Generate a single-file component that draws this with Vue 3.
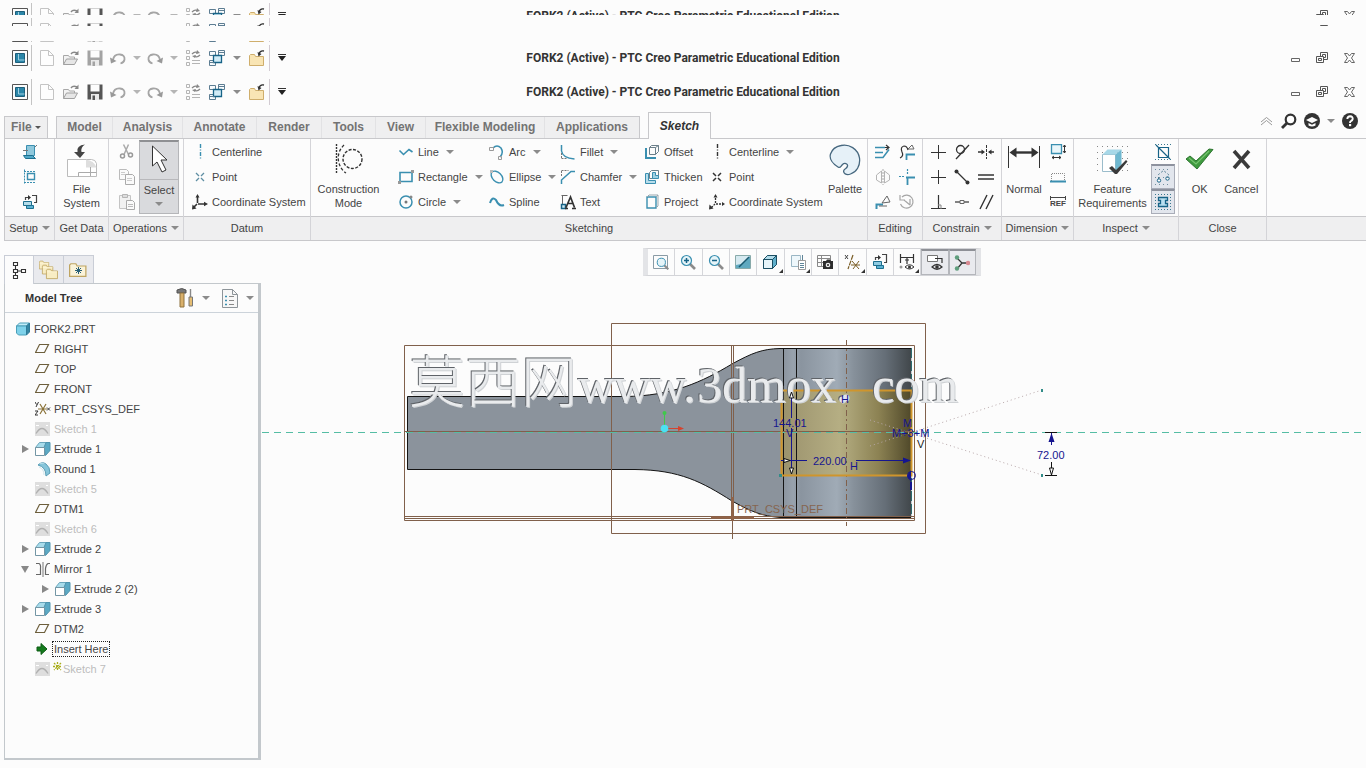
<script setup>
import { h } from 'vue'

const B = '#3a8fb0'
const K = '#333'
const line = (d, c = K, w = 1, extra = '') =>
  `<path d="${d}" fill="none" stroke="${c}" stroke-width="${w}" ${extra}/>`
const fill = (d, c = K, extra = '') => `<path d="${d}" fill="${c}" ${extra}/>`
const magnifier = (mark) =>
  line('M10 10l5 5', '#8b8b8b', 2.6) +
  `<circle cx="6.5" cy="6.5" r="5" fill="#e6f4f8" stroke="${B}" stroke-width="1.2"/>` + mark

const saveIcon = (c) =>
  fill('M.5.5h15v15H.5z', c) + fill('M3.5.5h9v7h-9z', '#fcfcfc') +
  fill('M4 10h8v6H4z', '#e9e9e9') + fill('M5.500 11.500h2.500V16H5.500z', c)
const cube = (front, top, side) =>
  fill('M1.500 5.500h9v9h-9z', front, `stroke="${B}"`) +
  fill('M1.500 5.500l4-4h9l-4 4z', top, `stroke="${B}"`) +
  fill('M10.500 5.500l4-4v9l-4 4z', side, `stroke="${B}"`)
const folder = (x, y, s = 1) =>
  `<g transform="translate(${x} ${y}) scale(${s})">` +
  fill('M.5 12.500V2.500l1-1h4l1 2h7v9z', '#f8edc4', 'stroke="#bfa562"') +
  line('M1 4.500h12', '#fff6d8') + '</g>'

const icons = {
  app: fill('M.5.5h15v15H.5z', '#fcfcfc', 'stroke="#555"') + fill('M3.500 3.500h9v9h-9z', '#2b86a8', 'stroke="#1d5f7b"') + line('M6.500 4v6h6', '#9fd0e2'),
  doc: fill('M1.500.5h8l5 5v10h-13z', '#fdfdfd', 'stroke="#c4c4c4"') + line('M9.500.5v5h5', '#c4c4c4'),
  open: fill('M.5 14.500v-9h5l1 1.500h5v2', '#f2f2f2', 'stroke="#a8a8a8"') + fill('M.5 14.500l3-5.500h11l-3 5.500z', '#e6e6e6', 'stroke="#a0a0a0"') + line('M8 4q2-3 6-1', '#888', 1.4) + fill('M15.500.5v4.500h-4z', '#888'),
  saveDim: saveIcon('#a3a3a3'),
  save: saveIcon('#555'),
  undo: line('M3 10q1-6 7-5.500 5 .5 4.500 5-.5 3-4 4', '#a5a5a5', 1.8) + fill('M0 7.500l1 6 5.500-2.500z', '#999'),
  redo: line('M13 10q-1-6-7-5.500-5 .5-4.500 5 .5 3 4 4', '#a5a5a5', 1.8) + fill('M16 7.500l-1 6-5.500-2.500z', '#999'),
  regen: line('M1.500.5h3v3h-3zM1.500 6.500h3v3h-3zM1.500 12.500h3v3h-3zM7 10.500h8M7 13.500h8', '#b5b5b5') + line('M7 4q3-3 6-1M15 5q-3 3-6 1', '#888', 1.3) + fill('M12 0l3 3-4 1zM10 8L7 6l4-1z', '#888'),
  windows: fill('M.5 1.500h6v4h-6zM9.500.5h6v5h-6zM.5 10.500h6v5h-6z', '#f8fbfd', 'stroke="#5d7d92"') + fill('M4.500 5.500h8v7h-8z', '#d2ecf7', 'stroke="#176387" stroke-width="1.3"') + line('M9.500 2.500h6M.5 12.500h5', '#5d7d92'),
  closeWin: fill('M.5 15.500v-10l1-1h4l1 2h8v9z', '#f9e5b4', 'stroke="#cfae6c"') + line('M15 1q-4-1-5 3', K, 1.3) + fill('M8.500 2l1 4.500 3-2.500z', K),
  min: line('M3.500 7.500h8v3h-8z', '#666'),
  restore: line('M5.500 1.500h7v7h-7zM7.500 3.500h3v3h-3z', '#555') + fill('M1.500 5.500h7v6h-7z', '#fcfcfc', 'stroke="#555"') + line('M3.500 7.500h3v2h-3z', '#555'),
  close: line('M2.500 2.500h3l2 2.500 2-2.500h3L9.500 7l3 4.500h-3l-2-2.500-2 2.500h-3L5.500 7z', '#666'),
  chevron: line('M2 8l5.500-4.500L13 8M2 11l5.500-4.500L13 11', '#999'),
  search: `<circle cx="9.500" cy="6.500" r="4.800" fill="#fff" stroke="#333" stroke-width="2.200"/>` + line('M6 10l-5 5', K, 2.8),
  learn: `<circle cx="8" cy="8" r="8" fill="#333"/>` + fill('M2 7l6-3 6 3-6 3z', '#fcfcfc') + fill('M4.500 10l3.500 1.700L11.500 10v2.500Q8 14.500 4.500 12.500z', '#fcfcfc'),
  help: `<circle cx="8" cy="8" r="8" fill="#333"/>` + line('M5.300 6q.2-2.700 2.900-2.700 2.700.2 2.500 2.700-.4 1.500-1.700 2-1 .5-1 2', '#fff', 1.9) + fill('M7 11h2.200v2.200H7z', '#fff'),

  setup1: fill('M4.500 1.500h8v10h-8z', '#8fc8dc', `stroke="${B}"`) + fill('M1.500 11.500h9l3 3h-10z', '#4fa8c8', 'stroke="#1d6f8e"') + line('M1 6.500h5M13 3l2-2', '#777'),
  setup2: line('M2 2.500h12M2 13.500h12', B, 1, 'stroke-dasharray="2 1"') + line('M2.500.5v15', B, 1, 'stroke-dasharray="2 1"') + line('M5.500 4.500h7v6h-7z', B, 1.4),
  setup3: fill('M4.500 11.500h7v3h-7z', '#5bb1d2', 'stroke="#1d6f8e"') + fill('M1.500 7.500h8v4h-8z', '#b4dcea', 'stroke="#1d6f8e"') + line('M3.500 6V3.500H7M10 1.500h4.500v7H12', '#444', 1.2) + fill('M6 1l3 2.500L6 6z', K),
  fileSystem: fill('M1.500 15.500h24q4 0 5 4v13h-29z', '#fff', 'stroke="#bbb"') + fill('M20 15.500q8 1 10.500 8H20z', '#dedede') + line('M12.500 32.500v-4h18M24.500 23v9', '#aaa') + fill('M19 .5q-9 1-7.500 7.500H8l6 6 5-6h-3.500Q14.500 3 19 .5z', '#444'),
  cut: line('M4.500.5l5 10M9.500.5l-4.500 10', '#aaa', 1.5) + `<circle cx="3.500" cy="12" r="2" fill="none" stroke="#999" stroke-width="1.500"/><circle cx="11.500" cy="11" r="2" fill="none" stroke="#999" stroke-width="1.500"/>`,
  copy: fill('M.5.5h7l2 2v8h-9z', '#fafafa', 'stroke="#bbb"') + fill('M6.500 5.500h7l2 2v8h-9z', '#fafafa', 'stroke="#aaa"') + line('M2 3.500h4M2 5.500h4M8 9.500h5M8 11.500h5', '#ccc'),
  paste: fill('M.5 1.500h11v13H.5z', '#f1f1f1', 'stroke="#c4c4c4"') + fill('M3.500.5h5v3h-5z', '#ddd', 'stroke="#b5b5b5"') + fill('M7.500 6.500h6l2 2v7h-8z', '#fafafa', 'stroke="#aaa"') + line('M9 10.500h5M9 12.500h5', '#bbb'),
  cursor: fill('M3.500 1v20l4.500-4 5 10 4-2-5-10h6z', '#fff', 'stroke="#333"'),
  centerBlue: line('M8.500 0v16', B, 1.4, 'stroke-dasharray="4 1.500 1 1.500"'),
  pointBlue: line('M4 4l3 3M12 4L9 7M4 12l3-3M12 12L9 9', '#5e8ea3', 1.3),
  csys: line('M5.500 9V3M6 10h7M5 10l-3.500 3.500', K, 1.6) + fill('M5.500 0l2 3.500h-4zM16 10l-4-2.200v4.400zM0 15.500l.5-5 4 4z', K),
  construct: line('M2.500 0v30', K, 1.4, 'stroke-dasharray="2 1"') + line('M10 1Q3 8 4.500 17 6 25 12 29', K, 1.3, 'stroke-dasharray="3 2"') + `<circle cx="18.500" cy="15" r="9.500" fill="none" stroke="#333" stroke-width="1.400" stroke-dasharray="3 1.500"/>`,
  line: line('M1.500 6.500l4 4L11 5.500l3.500 2.500', B, 1.6),
  rect: line('M2 3.500h12v9H2z', B, 1.6) + fill('M0 12h3v3H0zM13 1h3v3h-3z', '#999'),
  circle: `<circle cx="8" cy="8" r="6" fill="none" stroke="${B}" stroke-width="1.500"/><circle cx="8" cy="8" r="1.500" fill="#777"/><circle cx="13" cy="3" r="1.500" fill="#888"/>`,
  arc: line('M4 4Q8 0 12 4q3 5-1 9', B, 1.5) + line('M.5 3.500h4v3h-4zM9.500 12.500h3v3h-3z', '#999'),
  ellipse: `<ellipse cx="8" cy="8" rx="7" ry="4.500" transform="rotate(45 8 8)" fill="none" stroke="${B}" stroke-width="1.400"/>` + fill('M1 1h3v3H1z', '#bbb'),
  spline: line('M1 9Q3 2 7 6q3 7 8 5', B, 2),
  fillet: line('M1.500 1v6q1 7 13 8', B, 1.5) + line('M1.500 14.500h5M1.500 9v5', '#777', 1, 'stroke-dasharray="2 1"'),
  chamfer: line('M1.500 15V11L11 2.500h4', B, 1.5) + line('M1.500 1.500h7M1.500 2v6', '#777', 1, 'stroke-dasharray="2 1"'),
  text: line('M1.500 1.500h6M2.500 1v9', '#666', 1) + fill('M1.500 10.500h4v4h-4z', '#cfe9f3', 'stroke="#176387" stroke-width="1.500"') + line('M6 13.500L10.500 3l4 10.500M7.500 9.500h6M5 14.500h3M12 14.500h4', K, 1.7),
  offset: line('M2 4v10h10', B, 2) + line('M5.500 10.500v-7l2-2h7v6l-3 3zM5.500 3.500h6v7M11.500 3.500l3-2', '#6b7f8a'),
  thicken: fill('M1.500 4.500h3v7h7v3h-10z', '#b7ddeb', `stroke="${B}"`) + line('M5.500 9.500v-6l2-2h7v6l-2 2z', '#6b7f8a') + fill('M8.500 3.500h3v3h3v3h-6z', '#9fd0e2', `stroke="${B}"`),
  project: line('M3 3v11h9V3z', B, 1.4) + line('M3 3l2-2h9l-2 2M12 14l2-2V1', '#9aa7ae'),
  centerK: line('M8.500 0v16', K, 1.4, 'stroke-dasharray="4 1.500 1 1.500"'),
  pointK: line('M4 4l3 3M12 4L9 7M4 12l3-3M12 12L9 9', K, 1.5),
  csysDash: line('M6.500 9V3M7 10h7M6 10l-4 4', K, 1.3, 'stroke-dasharray="2 1"') + fill('M6.500 0l2 3.500h-4zM16 10l-3-2v4zM0 15.500l.5-5 4 4z', K),
  palette: fill('M12 1.500C20-.5 29 5 30.500 14c1 8-3 14-9 16-4 1.500-8-.5-6.500-4 1-1.500 3-1.500 3.500-4 .5-2.500-3-3.500-5-1.500s-2 4-4.500 2.500C4 20 0 15 1.500 10 3 5.500 7 2.500 12 1.500z', '#e6f1f8', 'stroke="#47687f" stroke-width="1.300"'),
  ed1: line('M0 3.500h10M0 8.500h8M0 13.500h8l6-8', B, 1.5) + line('M10 3.500h4M11 1l3 2.500L11 6', K, 1.2),
  ed2: line('M1 14q4-2 2-6-2-5 2-6 3 0 4 4', K, 1.2) + line('M7.500 16v-5.500H16', B, 1.8) + line('M9 5l4-4 2 4z', '#666'),
  ed3: line('M6.500 2v12L1.500 11V6zM9.500 2v12l5-3V6z', '#b5b5b5') + line('M8 0v16', '#aaa', 1, 'stroke-dasharray="2 1"'),
  ed4: line('M8.500 0v6M0 7.500h5', B, 1.2, 'stroke-dasharray="2 1"') + line('M8.500 8v8M7 8.500h9', B, 1.8),
  ed5: line('M1.500 15V10.500H8', B, 2) + line('M7 9l5-7 3 6zM4 12h8', '#666'),
  ed6: line('M3 3a6.500 6.500 0 1 1-1.500 7M1 1v5h5M5 6l6 5M11 5v6', '#a5a5a5', 1.2),
  cPlus: line('M8.500 1v14M1 8.500h15', K, 1),
  cTan: `<circle cx="6.500" cy="5.500" r="4" fill="none" stroke="#333" stroke-width="1.300"/>` + line('M2 15L15 1', K, 1.3),
  cSym: line('M8.500 1v14', K, 1, 'stroke-dasharray="3 1"') + line('M0 8h5M16 8h-5', K, 1.3) + fill('M7 8L3.500 5.500v5zM10 8l3.500-2.500v5z', K),
  cMid: line('M2 2l12 12', K, 1.2) + `<circle cx="2.500" cy="2.500" r="2" fill="#333"/><circle cx="13.500" cy="13.500" r="2" fill="#333"/>`,
  cEq: line('M0 6h16M0 10h16', K, 1.4),
  cPerp: line('M8.500 1v13M1 14.500h15', K, 1.2) + line('M8 11h3v4', '#888'),
  cCoin: line('M1 8h14', K, 1.2) + fill('M6 6.500h4v3H6z', '#fcfcfc', 'stroke="#666"'),
  cPar: line('M2 15L9 1M8 15l7-14', K, 1.4),
  normal: line('M1.500 2v22M32.500 2v22', K, 1) + line('M6 8.500h22', K, 2.4) + fill('M2.500 8.500l7-5v10zM31.500 8.500l-7-5v10z', K),
  dim1: fill('M1.500.5h10v9h-10z', '#eaf6fa', `stroke="${B}" stroke-width="1.300"`) + line('M14.500 1v8M2 13.500h9M13 3l1.500-2L16 3M13 7l1.500 2L16 7M4 12l-2 1.500L4 15M9 12l2 1.500L9 15', K),
  dim2: line('M1.500 12V4.500h13V12', '#888', 1, 'stroke-dasharray="1 1"') + line('M0 12.500h16', B, 2),
  feature: line('M1 2.500h31M1 8.500h31M1 14.500h31M1 20.500h31M1 26.500h31', '#888', 1, 'stroke-dasharray="1 4"') + fill('M6.500 10.500h13v17h-13z', '#fff', 'stroke="#9abccb"') + fill('M6.500 10.500l5-5h14l-6 5z', '#a7d8e8') + fill('M19.500 10.500l6-5v15l-6 7z', '#6fb8d0') + fill('M13 24l3-2 4 4 10-10 1.500 1.500L21 30h-2z', '#3a3a3a'),
  ins1: line('M3.500 3.500h10v10h-10zM1 1l14 14', '#176387', 1.2) + line('M0 .5h16M0 15.500h16', '#39778f', 1, 'stroke-dasharray="1 2"'),
  ins2: line('M3.500 10V5.500l5-4 5 4V8', '#4f7c92', 1, 'stroke-dasharray="2 2"') + `<circle cx="4" cy="11.500" r="1.700" fill="#fff" stroke="#176387"/><circle cx="12.500" cy="9.500" r="1.700" fill="#fff" stroke="#176387"/>` + line('M0 .5h16M0 15.500h16M0 8.500h16', '#718e9d', 1, 'stroke-dasharray="1 3"'),
  ins3: fill('M3.500 3.500h9v3h-2v3h2v3h-9v-3h2v-3h-2z', '#b9dff0', 'stroke="#176387" stroke-width="1.300"') + line('M0 .5h16M0 15.500h16M.5 0v16M15.500 0v16', '#39778f', 1, 'stroke-dasharray="1 2"'),
  ok: fill('M1 11l4-3 6 5L24 1l4 .5L12 21z', '#3f9b3f', 'stroke="#2e7530"') + line('M4 10l7 6L24 3', '#77c470', 1.2),
  cancel: line('M3 3l15 17M18 3L3 20', '#3a3a3a', 3.6),

  refit: line('M.5 1.500h14v13H.5z', '#8a9ba5') + `<g transform="translate(3 3) scale(.82)">${magnifier('')}</g>`,
  zoomIn: magnifier(line('M4 6.500h5M6.500 4v5', '#176387', 1.5)),
  zoomOut: magnifier(line('M4 6.500h5', '#176387', 1.5)),
  repaint: fill('M.5 1.500h15v13H.5z', '#d5e9f0', 'stroke="#8aa"') + fill('M1 14v-3l5-1L15 2v12z', '#5fa9c0') + line('M4 13L14 3', '#1c5a70', 1.4),
  display: cube('#e7f5fa', '#b2dcea', '#5fb0cc') + line('M1.500 5.500h9v9h-9zM1.500 5.500l4-4h9v9l-4 4M10.500 5.500l4-4', '#1d4f63'),
  views: fill('M1.500 1.500h9v11h-9z', '#eef7fb', 'stroke="#9ab6c4"') + fill('M8.500 6.500h7v9h-7z', '#fff', 'stroke="#999"') + line('M10 9.500h4M10 11.500h4M10 13.500h4M12.500 1v5', '#5f8598'),
  camera: line('M.5 1.500h13v11H.5zM.5 4.500h13M.5 8.500h13M4.500 1.500v11', '#888') + fill('M6 7h3l1-1.500h3L14 7h2v8H6z', '#2d2d2d') + `<circle cx="11" cy="11" r="2.300" fill="#eee"/><circle cx="11" cy="11" r="1" fill="#222"/>`,
  datum: line('M1 1l3 4M4 1L1 5', '#444') + line('M9 1L4 15', '#7a5d25', 1.2, 'stroke-dasharray="5 1"') + line('M8 7l7 8M15 7l-6 8M7 11h9', '#7a5d25'),
  orient: fill('M4.500 11.500h7v3h-7z', '#5bb1d2', 'stroke="#1d6f8e"') + fill('M1.500 7.500h8v4h-8z', '#8fcbe2', 'stroke="#1d6f8e"') + line('M3.500 6V3.500H7M10 .5h4.500v8H12', '#444', 1.2) + fill('M6 1l3 2.500L6 6z', K),
  dimShow: line('M1.500 0v9M14.500 0v9M2 3.500h12M6 6h4M8 4v6', K, 1.2) + line('M6 13q4.500-4.500 9 0-4.500 4-9 0z', K) + `<circle cx="10.500" cy="13" r="1.500" fill="#333"/><circle cx="2" cy="13" r="1.500" fill="#999"/>`,
  eyeBox: fill('M.5.5h10v6H.5z', '#fff', 'stroke="#777"') + line('M8 3.500h7V8', K, 1.2) + line('M5 12q5-5 10 0-5 4.500-10 0z', K, 1.2) + `<circle cx="10" cy="12" r="1.800" fill="#333"/>`,
  spin: line('M3 3l5 5-5 6M8 8h6', '#333', 1.3) + `<circle cx="3" cy="2.500" r="2.200" fill="#5f9e7d"/><circle cx="3" cy="13.500" r="2.200" fill="#5f9e7d"/><circle cx="14" cy="8" r="2.200" fill="#d98a92"/>`,

  treeTab: line('M1.500 1.500h4v3h-4zM1.500 8.500h4v3h-4zM1.500 14.500h4v3h-4zM9.500 8.500h4v3h-4zM5.500 10h4M3.500 4.500v4M3.500 11.500v3', '#333', 1.1),
  folders: folder(0, 0, .72) + folder(3, 4, .8) + folder(7, 8, .85),
  favorite: `<g transform="translate(0 1) scale(1.250 1.150)">${fill('M.5 12.500V2.500l1-1h4l1 2h7v9z', '#faf3d9', 'stroke="#bfa562"')}</g>` + line('M6 9.500h7M9.500 6v7M7 7l5 5M12 7l-5 5', '#275f77'),
  tools: fill('M1 2q5-3 9 0v3H1z', '#777', 'stroke="#555"') + fill('M4 5h4v14H4z', '#d9b06b', 'stroke="#8e7340"') + line('M14.500 1v8', '#888', 1.4) + fill('M13 9h3.500v9H13z', '#e5bd72', 'stroke="#777"'),
  list: fill('M.5.5h10l5 5v13H.5z', '#f7f7f7', 'stroke="#8d9499"') + line('M10.500.5v5h5', '#8d9499') + line('M3 7.500h2M3 11.500h2M3 15.500h2', B, 1.4) + line('M7 7.500h5M7 11.500h5M7 15.500h5', '#888'),

  part: fill('M1.500 5l3-3h10l-3 3z', '#c3edf8', 'stroke="#4a9fb9"') + fill('M1.500 5h10v9h-8l-2-2z', '#7fd2ea', 'stroke="#4a9fb9"') + fill('M11.500 5l3-3v9l-3 3z', '#3486a3', 'stroke="#2e7b98"'),
  plane: line('M4.500 3.500h9l-4 8h-9z', '#6d5f3c', 1.2),
  csysTree: line('M5 3l6 10M11 3L5 13M3 8h9', '#8a7238', 1.2) + line('M0 1l1.500 2.500M3.500 1L1 6M0 10h3l-3 4h3M12 6.500l3 3M15 6.500l-3 3', K),
  sketch: fill('M0 1h15v14H0z', '#dedede') + line('M1 12.500q6-10 12 0', '#b0b0b0', 1.3) + line('M1 4.500h3M11 4.500h2', '#fff'),
  extrude: fill('M.5 6.500l4-5h10l-4 5z', '#a9dceb', 'stroke="#6aa6bc"') + fill('M9 6.500l2-5h4v8l-4.500 5z', '#5ba9c4', 'stroke="#4f94ae"') + fill('M.5 6.500h9v8h-9z', '#fff', 'stroke="#7396a5"'),
  round: fill('M3 4q4-4 8-1 4 3 4 9l-4 3Q11 6 3 4z', '#86c5da', 'stroke="#5a9db5"') + fill('M4 3q3-2 6-.5', '#c6e7f0') + line('M4 6q5 2 5 8', '#cfe6ed'),
  mirror: line('M1 2.500h3q2 1 1.500 5v6H1M15 2.500h-2q-2 1-2.500 5v6H14', '#666', 1.2) + line('M8 1v15', '#777'),
  insert: fill('M2 6h4V2.500L12 8l-6 5.500V10H2z', '#157a1d', 'stroke="#0d5c14"'),
}

const Icon = (p) =>
  h('svg', {
    width: p.w || 16, height: p.h || 16,
    viewBox: `0 0 ${p.w || 16} ${p.h || 16}`,
    'aria-hidden': 'true', innerHTML: icons[p.n],
  })
Icon.props = ['n', 'w', 'h']

const docTitle = 'FORK2 (Active) - PTC Creo Parametric Educational Edition'
const bars = [
  { slice: 's1', save: 'save' },
  { slice: 's2', save: 'save' },
  { slice: 's3', save: 'saveDim' },
  { slice: 's4', save: 'saveDim' },
  { slice: 's5', save: 'save' },
]
const tabs = [
  ['Model', 56], ['Analysis', 70], ['Annotate', 74], ['Render', 65], ['Tools', 54],
  ['View', 50], ['Flexible Modeling', 119], ['Applications', 94],
]
const datum = [['centerBlue', 'Centerline'], ['pointBlue', 'Point'], ['csys', 'Coordinate System']]
const sketchCols = [
  { cls: 'c1', items: [['line', 'Line', 1], ['rect', 'Rectangle', 1], ['circle', 'Circle', 1]] },
  { cls: 'c2', items: [['arc', 'Arc', 1], ['ellipse', 'Ellipse', 1], ['spline', 'Spline']] },
  { cls: 'c3', items: [['fillet', 'Fillet', 1], ['chamfer', 'Chamfer', 1], ['text', 'Text']] },
  { cls: 'c4', items: [['offset', 'Offset'], ['thicken', 'Thicken'], ['project', 'Project']] },
  { cls: 'c5', items: [['centerK', 'Centerline', 1], ['pointK', 'Point'], ['csysDash', 'Coordinate System']] },
]
const editing = ['ed1', 'ed2', 'ed3', 'ed4', 'ed5', 'ed6']
const constrain = ['cPlus', 'cTan', 'cSym', 'cPlus', 'cMid', 'cEq', 'cPerp', 'cCoin', 'cPar']
const viewTools = [
  ['refit'], ['zoomIn'], ['zoomOut'], ['repaint'], ['display', 1], ['views', 1],
  ['camera'], ['datum', 1], ['orient'], ['dimShow', 1], ['eyeBox', 0, 1], ['spin', 0, 1],
]
const tree = [
  { i: 'part', t: 'FORK2.PRT', lvl: 0 },
  { i: 'plane', t: 'RIGHT', lvl: 1 },
  { i: 'plane', t: 'TOP', lvl: 1 },
  { i: 'plane', t: 'FRONT', lvl: 1 },
  { i: 'csysTree', t: 'PRT_CSYS_DEF', lvl: 1 },
  { i: 'sketch', t: 'Sketch 1', lvl: 1, dim: 1 },
  { i: 'extrude', t: 'Extrude 1', lvl: 1, a: 'closed' },
  { i: 'round', t: 'Round 1', lvl: 1 },
  { i: 'sketch', t: 'Sketch 5', lvl: 1, dim: 1 },
  { i: 'plane', t: 'DTM1', lvl: 1 },
  { i: 'sketch', t: 'Sketch 6', lvl: 1, dim: 1 },
  { i: 'extrude', t: 'Extrude 2', lvl: 1, a: 'closed' },
  { i: 'mirror', t: 'Mirror 1', lvl: 1, a: 'opened' },
  { i: 'extrude', t: 'Extrude 2 (2)', lvl: 2, a: 'closed' },
  { i: 'extrude', t: 'Extrude 3', lvl: 1, a: 'closed' },
  { i: 'plane', t: 'DTM2', lvl: 1 },
  { i: 'insert', t: 'Insert Here', lvl: 1, focus: 1 },
  { i: 'sketch', t: 'Sketch 7', lvl: 1, dim: 1, star: 1 },
]
</script>

<template>
  <div class="app">
    <header class="titles">
      <div v-for="b in bars" :key="b.slice" class="slice" :class="b.slice">
        <div class="bar">
          <div class="quick">
            <button class="q app-b" aria-label="Window"><Icon n="app" /></button>
            <button class="q" aria-label="New"><Icon n="doc" /></button>
            <button class="q" aria-label="Open"><Icon n="open" /></button>
            <button class="q" aria-label="Save"><Icon :n="b.save" /></button>
            <button class="q q22" aria-label="Undo"><Icon n="undo" /></button>
            <button class="q q15" aria-label="Undo list"><i class="caret light"></i></button>
            <button class="q q22" aria-label="Redo"><Icon n="redo" /></button>
            <button class="q q15" aria-label="Redo list"><i class="caret light"></i></button>
            <button class="q" aria-label="Regenerate"><Icon n="regen" /></button>
            <button class="q" aria-label="Windows"><Icon n="windows" /></button>
            <button class="q q15" aria-label="Windows list"><i class="caret"></i></button>
            <button class="q last" aria-label="Close window"><Icon n="closeWin" /></button>
            <button class="q" aria-label="Customize"><i class="caret over"></i></button>
          </div>
          <div class="doc">{{ docTitle }}</div>
          <div class="win">
            <button class="w" aria-label="Minimize"><Icon n="min" w="15" h="15" /></button>
            <button class="w" aria-label="Restore"><Icon n="restore" w="15" h="15" /></button>
            <button class="w" aria-label="Close"><Icon n="close" w="15" h="15" /></button>
          </div>
        </div>
      </div>
    </header>

    <nav class="tabs">
      <button class="tab file">File <i class="caret dark"></i></button>
      <div class="tabgroup">
        <button v-for="t in tabs" :key="t[0]" class="tab" :style="{ width: t[1] + 'px' }">{{ t[0] }}</button>
      </div>
      <button class="tab active">Sketch</button>
      <div class="aux">
        <button aria-label="Collapse ribbon"><Icon n="chevron" w="15" h="15" /></button>
        <button aria-label="Search"><Icon n="search" /></button>
        <button aria-label="Learning"><Icon n="learn" /></button>
        <i class="caret"></i>
        <button aria-label="Help"><Icon n="help" /></button>
      </div>
    </nav>

    <section class="ribbon">
      <div class="group g-setup">
        <div class="body"><div class="stack">
          <button v-for="n in ['setup1', 'setup2', 'setup3']" :key="n" class="sq" :aria-label="n"><Icon :n="n" /></button>
        </div></div>
        <div class="foot">Setup <i class="caret"></i></div>
      </div>
      <div class="group g-data">
        <div class="body"><button class="big"><Icon n="fileSystem" w="32" h="34" /><span>File<br />System</span></button></div>
        <div class="foot">Get Data</div>
      </div>
      <div class="group g-ops">
        <div class="body">
          <div class="stack">
            <button v-for="n in ['cut', 'copy', 'paste']" :key="n" class="sq" :aria-label="n"><Icon :n="n" /></button>
          </div>
          <button class="select"><span class="pick"><Icon n="cursor" w="20" h="30" /></span><span>Select</span><i class="caret"></i></button>
        </div>
        <div class="foot">Operations <i class="caret"></i></div>
      </div>
      <div class="group g-datum">
        <div class="body"><div class="stack">
          <button v-for="d in datum" :key="d[1]" class="cmd"><Icon :n="d[0]" />{{ d[1] }}</button>
        </div></div>
        <div class="foot">Datum</div>
      </div>
      <div class="group g-sketch">
        <div class="body">
          <button class="big construct"><Icon n="construct" w="30" h="34" /><span>Construction<br />Mode</span></button>
          <div v-for="c in sketchCols" :key="c.cls" class="stack" :class="c.cls">
            <button v-for="d in c.items" :key="d[1]" class="cmd"><Icon :n="d[0]" />{{ d[1] }}<i v-if="d[2]" class="caret"></i></button>
          </div>
          <button class="big palette"><Icon n="palette" w="32" h="34" /><span>Palette</span></button>
        </div>
        <div class="foot">Sketching</div>
      </div>
      <div class="group g-edit">
        <div class="body"><div class="cells two">
          <button v-for="n in editing" :key="n" class="sq" :aria-label="n"><Icon :n="n" /></button>
        </div></div>
        <div class="foot">Editing</div>
      </div>
      <div class="group g-con">
        <div class="body"><div class="cells">
          <button v-for="(n, k) in constrain" :key="k" class="sq" :aria-label="n"><Icon :n="n" /></button>
        </div></div>
        <div class="foot">Constrain <i class="caret"></i></div>
      </div>
      <div class="group g-dim">
        <div class="body">
          <button class="big"><Icon n="normal" w="34" h="34" /><span>Normal</span></button>
          <div class="stack">
            <button class="sq" aria-label="Perimeter"><Icon n="dim1" /></button>
            <button class="sq" aria-label="Baseline"><Icon n="dim2" /></button>
            <button class="sq ref" aria-label="Reference"><span class="arrow"></span>REF</button>
          </div>
        </div>
        <div class="foot">Dimension <i class="caret"></i></div>
      </div>
      <div class="group g-ins">
        <div class="body">
          <button class="big"><Icon n="feature" w="34" h="34" /><span>Feature<br />Requirements</span></button>
          <div class="stack">
            <button class="sq" aria-label="Overlapping geometry"><Icon n="ins1" /></button>
            <button class="sq on" aria-label="Highlight open ends"><Icon n="ins2" /></button>
            <button class="sq on" aria-label="Shade closed loops"><Icon n="ins3" /></button>
          </div>
        </div>
        <div class="foot">Inspect <i class="caret"></i></div>
      </div>
      <div class="group g-close">
        <div class="body">
          <button class="big end"><Icon n="ok" w="30" h="26" /><span>OK</span></button>
          <button class="big end"><Icon n="cancel" w="21" h="26" /><span>Cancel</span></button>
        </div>
        <div class="foot">Close</div>
      </div>
      <div class="group g-rest"><div class="body"></div><div class="foot"></div></div>
    </section>

    <main class="work">
      <aside class="side">
        <div class="side-tabs">
          <button class="st on" aria-label="Model tree"><Icon n="treeTab" w="15" h="19" /></button>
          <button class="st" aria-label="Folder browser"><Icon n="folders" w="20" h="20" /></button>
          <button class="st" aria-label="Favorites"><Icon n="favorite" w="19" h="18" /></button>
        </div>
        <div class="panel">
          <div class="panel-head">
            <h2>Model Tree</h2>
            <button aria-label="Settings"><Icon n="tools" w="18" h="20" /><i class="caret"></i></button>
            <button aria-label="Show"><Icon n="list" w="16" h="19" /><i class="caret"></i></button>
          </div>
          <ul class="tree">
            <li v-for="r in tree" :key="r.t" :class="['l' + r.lvl, { dim: r.dim }]">
              <span class="tw"><i v-if="r.a" :class="r.a"></i></span>
              <Icon :n="r.i" />
              <svg v-if="r.star" class="star" width="9" height="9" viewBox="0 0 9 9">
                <path d="M4.500 0v9M0 4.500h9M1 1l7 7M8 1L1 8" stroke="#a9ad1c" stroke-width="1.300" stroke-dasharray="2 1" fill="none" />
              </svg>
              <span class="name" :class="{ focus: r.focus }">{{ r.t }}</span>
            </li>
          </ul>
        </div>
      </aside>

      <section class="canvas">
        <div class="view-tools">
          <button v-for="v in viewTools" :key="v[0]" :class="{ pressed: v[2], more: v[1] }" :aria-label="v[0]"><Icon :n="v[0]" /></button>
        </div>
        <svg class="model" viewBox="261 241 1105 527" preserveAspectRatio="xMidYMin meet">
          <defs>
            <linearGradient id="cyl" x1="783" x2="911" y1="0" y2="0" gradientUnits="userSpaceOnUse">
              <stop offset="0" stop-color="#8b949e" /><stop offset=".08" stop-color="#98a2ad" />
              <stop offset=".14" stop-color="#8a949f" /><stop offset=".42" stop-color="#a0abb6" />
              <stop offset=".55" stop-color="#87919b" /><stop offset=".8" stop-color="#656e77" />
              <stop offset="1" stop-color="#41474b" />
            </linearGradient>
            <linearGradient id="gold" x1="781" x2="911" y1="0" y2="0" gradientUnits="userSpaceOnUse">
              <stop offset="0" stop-color="#9a916c" /><stop offset=".45" stop-color="#b5ae83" />
              <stop offset=".75" stop-color="#8c8253" /><stop offset="1" stop-color="#50492a" />
            </linearGradient>
          </defs>
          <path d="M407.500 396.500H625C672 396 702 382 732 364C752 353 762 349 780 348.500H911.500V517.500H780C762 516 752 512 732 501C702 482 680 470 635 469.500H407.500z" fill="#8b939c" />
          <path d="M783 348.500H911V517H783z" fill="url(#cyl)" />
          <path d="M781 390.500H911V475H781z" fill="url(#gold)" />
          <g fill="none" stroke="#141414">
            <path d="M911.500 348.500H780C762 349 752 353 732 364C702 382 672 396 625 396.500H407.500V469.500H635C680 470 702 482 732 501C752 512 762 516 780 517.500H911" />
            <path d="M783.500 348v169M796.500 348v169" />
          </g>
          <g fill="none" stroke="#80604b">
            <path d="M611.500 323.500h314v210h-314zM404.500 345.500h510v175h-510zM404 516.500h510M404 518.500h510" />
            <path d="M731.500 345v175M733.500 345v175M732.500 500v39M404 431.500h510" />
            <path d="M846.500 340v186" stroke-dasharray="6 3 2 3" />
            <path d="M711 517.500h43M732.500 497v24" stroke="#936347" stroke-width="2" />
          </g>
          <path d="M262 432.500H1366" fill="none" stroke="#55bda4" stroke-dasharray="7 5" />
          <path d="M911.500 348v169" fill="none" stroke="#2c6b6e" stroke-dasharray="10 3" />
          <path d="M870 446L1042 390M870 420L1042 475" fill="none" stroke="#b8a8aa" stroke-dasharray="1 3" />
          <path d="M781.500 390.500H911.500V475.500H781.500z" fill="none" stroke="#cf952c" stroke-width="2" />
          <path d="M1041 389h2v3h-2zM1041 474h2v3h-2zM779 474h3v3h-3z" fill="#328c88" />
          <g class="mark">
            <text y="402"><tspan class="han" x="409">莫西网</tspan><tspan x="578">www.</tspan><tspan x="697">3dmox.</tspan><tspan x="872">com</tspan></text>
          </g>
          <circle cx="846" cy="398" r="3.500" fill="#dfe3f2" />
          <g fill="none">
            <path d="M664.500 428V413" stroke="#3fc94a" /><path d="M665 428.500h16" stroke="#d5432e" />
            <circle cx="664.500" cy="413" r="2" fill="#41c84c" /><path d="M678 426l6 2.500-6 2.500z" fill="#d5432e" />
            <circle cx="664.500" cy="428.500" r="3.800" fill="#4ce0f2" />
          </g>
          <g fill="none" stroke="#15158f">
            <path d="M791.500 393v25M791.500 428v45M781 460.500h26M856 460.500h50M1051.500 433v12" />
            <path d="M1045 432.500h12M1045 475.500h12M1051.500 462v13" stroke="#111" />
            <circle cx="911.500" cy="475.500" r="4" /><path d="M911 482v8" stroke-width="2" />
          </g>
          <path d="M911 460.500l-8-3v6zM1051.500 433l-3 9h6zM911 470v12l-4-6z" fill="#15158f" />
          <path d="M791.500 392l-2 6h4zM791.500 474l-2-6h4zM790 460.500l-6-2v4zM1051.500 475l-2-7h4z" fill="#fff" stroke="#111" />
          <g class="dims">
            <text x="773" y="427">144.01</text><text x="813" y="465">220.00</text>
            <text x="850" y="470">H</text><text x="841" y="403">H</text>
            <text x="786" y="437">V</text><text x="903" y="427">M</text>
            <text x="892" y="437">M+3+M</text>
            <text class="ink" x="917" y="448">V</text><text x="1037" y="459">72.00</text>
          </g>
          <text class="csys-label" x="737" y="513">PRT_CSYS_DEF</text>
        </svg>
      </section>
    </main>
  </div>
</template>

<style>
html, body { background: #fcfcfc; }
</style>

<style scoped>
.app { min-height: 100vh; display: flex; flex-direction: column; background: #fcfcfc; color: #444; font: 11px/14px "Liberation Sans", Arial, sans-serif; overflow: hidden; }
button { border: 0; padding: 0; margin: 0; background: none; color: inherit; font: inherit; }
svg { display: block; flex: none; }
.caret { display: inline-block; flex: none; width: 0; height: 0; border: 4px solid transparent; border-top-color: #8b8b8b; border-bottom: 0; vertical-align: 1px; }
.caret.light { border-top-color: #b5b5b5; }
.caret.dark { border-width: 3px; border-bottom: 0; border-top-color: #555; vertical-align: 2px; }
.caret.over { border-width: 5px 4px 0; border-top-color: #222; position: relative; }
.caret.over::before { content: ""; position: absolute; left: -4px; top: -7px; width: 8px; height: 1px; background: #333; }

.slice { overflow: hidden; }
.s1 { height: 15px; }
.s2 { height: 11px; }
.s3 { height: 1px; margin: 15px 0 0; }
.s3 .bar { margin-top: -23px; }
.s4 { margin-bottom: 2px; }
.bar { height: 32px; display: grid; grid-template-columns: 1fr auto 1fr; align-items: center; }
.quick { display: flex; height: 26px; padding-left: 8px; }
.q { width: 24px; display: flex; align-items: center; justify-content: center; }
.app-b { border-right: 1px solid #c4c4c4; margin-right: 3px; }
.q22 { width: 22px; }
.q15 { width: 15px; }
.last { border-right: 1px solid #d2cbd2; width: 26px; }
.doc { font: bold 12px/14px Roboto, "Liberation Sans", sans-serif; color: #333; white-space: nowrap; }
.s2 .doc, .s3 .doc, .s3 .win { visibility: hidden; }
.win { display: flex; justify-content: flex-end; gap: 12px; padding-right: 9px; }

.tabs { height: 30px; display: flex; align-items: flex-end; padding-left: 4px; position: relative; }
.tab { height: 21px; padding-bottom: 2px; font-weight: bold; font-size: 12px; color: #737373; background: #efeff0; white-space: nowrap; }
.file { width: 44px; border: 1px solid #c8c8cb; border-bottom: 0; margin-right: 8px; height: 22px; }
.tabgroup { display: flex; border: 1px solid #c8c8cb; border-bottom: 0; height: 21px; }
.tabgroup .tab { border-right: 1px solid #e2e2e4; }
.tabgroup .tab:last-child { border-right: 0; }
.active { width: 63px; height: 27px; margin: 0 0 -1px 8px; border: 1px solid #c8c8cb; border-bottom: 0; background: #fcfcfc; color: #333; font-style: italic; position: relative; padding-bottom: 0; }
.aux { margin-left: auto; display: flex; align-items: center; gap: 7px; padding: 0 8px 9px 0; }

.ribbon { display: flex; margin-left: 4px; border: 1px solid #c8c8cb; border-right: 0; }
.group { display: flex; flex-direction: column; border-right: 1px solid #d4d4d8; flex: none; box-sizing: border-box; }
.body { height: 77px; box-sizing: border-box; display: flex; }
.foot { height: 23px; border-top: 1px solid #c8c8cb; background: #efeff0; display: flex; align-items: center; justify-content: center; gap: 4px; white-space: nowrap; padding-bottom: 2px; box-sizing: content-box; height: 21px; }
.g-setup { width: 50px; }
.g-data { width: 54px; }
.g-ops { width: 75px; }
.g-datum { width: 127px; }
.g-sketch { width: 557px; }
.g-edit { width: 55px; }
.g-con { width: 79px; }
.g-dim { width: 72px; }
.g-ins { width: 105px; }
.g-close { width: 88px; }
.g-close .body { padding-right: 4px; }
.g-rest { flex: 1; border-right: 0; }
.stack { display: flex; flex-direction: column; }
.stack > * { height: 25px; }
.sq { width: 24px; display: flex; align-items: center; justify-content: center; }
.cmd { display: flex; align-items: center; gap: 4px; white-space: nowrap; text-align: left; }
.cmd .caret { margin-left: 3px; }
.big { display: flex; flex-direction: column; align-items: center; gap: 1px; flex: 1; padding-top: 5px; height: 75px; justify-content: flex-start; box-sizing: border-box; }
.big span { line-height: 14px; padding-top: 3px; white-space: nowrap; }
.palette { padding-left: 0; }
.g-setup .stack { margin: 0 auto; }
.g-ops .stack { padding-left: 6px; }
.select { width: 40px; height: 74px; margin-top: 1px; background: #d9dadd; border: 1px solid #b5b6b9; border-top: 2px solid #8f9093; display: flex; flex-direction: column; align-items: center; }
.pick { display: flex; justify-content: center; width: 100%; height: 38px; padding-top: 3px; box-sizing: border-box; border-bottom: 1px solid #b8b8bb; margin-bottom: 3px; }
.select .caret { margin-top: 5px; }
.g-datum .stack { padding-left: 8px; }
.construct { flex: none; width: 75px; margin-right: 12px; }
.c1 { width: 91px; }
.c2 { width: 71px; }
.c3 { width: 84px; }
.c4 { width: 65px; }
.c5 { width: 114px; }
.cells { display: grid; grid-template-columns: repeat(3, 24px); grid-auto-rows: 25px; margin: 0 auto; }
.cells.two { grid-template-columns: 24px 24px; }
.ref { flex-direction: column; font-size: 8px; line-height: 8px; font-weight: bold; border: 0; }
.arrow { width: 14px; height: 4px; border: 1px solid #444; border-width: 0 1px; background: linear-gradient(#444, #444) center / 100% 1px no-repeat; }
.on.sq { background: #e2e6ed; border: 1px solid #a9adb8; border-top: 2px solid #8d929e; box-sizing: border-box; }
.g-dim .stack { padding-right: 3px; }
.g-ins .stack { padding-right: 3px; }
.end { padding-top: 9px; gap: 5px; height: 71px; }

.work { flex: 1; display: flex; }
.side { width: 257px; flex: none; margin: 14px 0 8px 4px; display: flex; flex-direction: column; }
.side-tabs { display: flex; }
.st { width: 30px; height: 28px; background: #e9eaee; border: 1px solid #c9cdd6; border-bottom: 0; border-left: 0; display: flex; align-items: center; justify-content: center; }
.st.on { background: #fcfcfc; border-left: 1px solid #c9cdd6; height: 29px; margin-bottom: -1px; position: relative; width: 30px; }
.panel { flex: 1; border: 1px solid #c3c8cc; border-right-width: 3px; border-bottom-width: 2px; }
.panel-head { height: 28px; display: flex; align-items: center; border-bottom: 1px solid #ccd3da; padding: 0 4px 0 20px; gap: 12px; }
.panel-head h2 { margin: 0; font-size: 11px; flex: 1; color: #333; }
.panel-head button { display: flex; align-items: center; gap: 8px; }
.tree { list-style: none; margin: 0; padding: 6px 0 0; }
.tree li { height: 20px; display: flex; align-items: center; }
.l0 { padding-left: 1px; }
.l1 { padding-left: 10px; }
.l2 { padding-left: 30px; }
.tw { width: 20px; display: flex; justify-content: center; }
.l0 .tw { width: 9px; }
.closed { border: 4px solid transparent; border-left: 7px solid #888; border-right: 0; }
.opened { border: 4px solid transparent; border-top: 7px solid #888; border-bottom: 0; }
.name { padding: 0 1px; margin-left: 2px; }
.dim .name { color: #bdbdbd; }
.star { margin: 0 -2px 6px 2px; }
.focus { outline: 1px dotted #222; }

.canvas { flex: 1; position: relative; display: flex; justify-content: center; align-items: flex-start; padding-top: 7px; }
.view-tools { position: relative; z-index: 1; display: grid; grid-template-columns: repeat(12, 1fr); width: 328px; height: 26px; border: 1px solid #d3d4d8; border-width: 1px 5px; border-left-color: #e3e4e7; border-right-color: #e3e4e7; background: #fcfcfc; margin-right: 3px; }
.view-tools button { display: flex; align-items: center; justify-content: center; border-right: 1px solid #d5d6da; position: relative; }
.view-tools .pressed { background: #e9eaee; border: 1px solid #b4b6bb; border-top: 2px solid #8e9096; }
.view-tools .more::after { content: ""; position: absolute; right: 1px; bottom: 2px; border: 2px solid #333; border-top-color: transparent; border-left-color: transparent; }
.model { position: absolute; left: 0; top: 0; width: 100%; height: 100%; }
.mark text { font: 50px "Liberation Serif", serif; fill: #e9ebed; }
.mark .han { font: 300 56px "Noto Sans CJK SC", sans-serif; }
.mark { filter: drop-shadow(-1px -1px 0 #5f6368) drop-shadow(1px 1px 0 #cfd2d5); }
.dims text { font: 11px "Liberation Sans", sans-serif; fill: #15158f; }
.dims .ink { fill: #222; }
.csys-label { font: 11px "Liberation Sans", sans-serif; fill: #86654f; }
</style>
